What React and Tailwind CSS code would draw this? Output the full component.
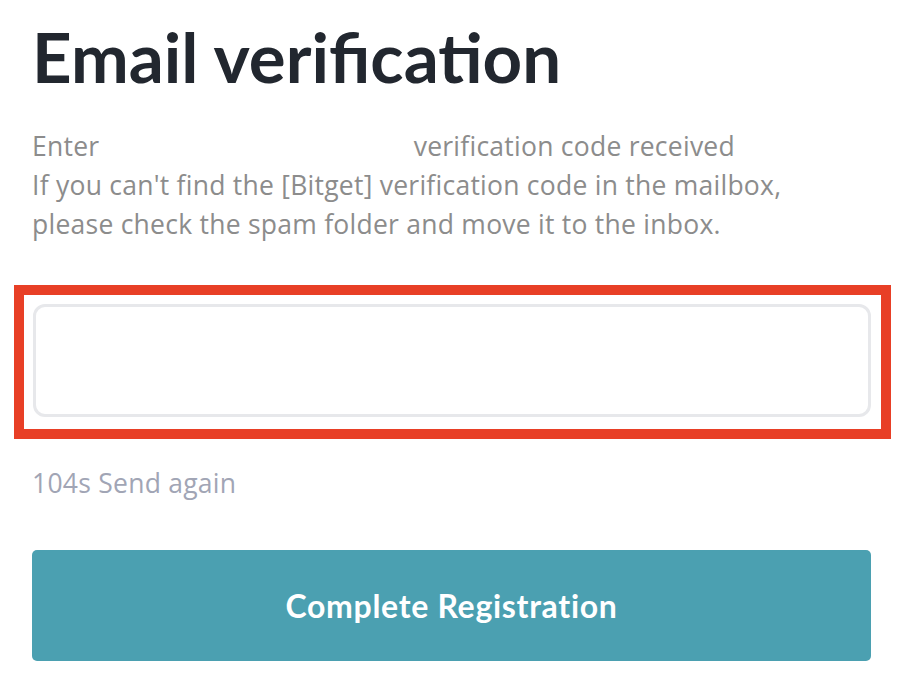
import React from "react";

const App = () => {
  return (
    <div className="w-[898px] h-[692px] bg-white overflow-hidden pl-8 pr-[27px] font-['Open_Sans',sans-serif]">
      {/* Title */}
      <h1 className="pt-[17px] text-[69px] leading-[80px] font-bold text-[#22272f] font-['Lato',sans-serif]">
        Email verification
      </h1>

      {/* Description */}
      <div className="mt-[30px] text-[26.5px] leading-[39px] tracking-[0.25px] text-[#8c8c8c]">
        <p>
          Enter <span className="inline-block w-[300px]"></span> verification code received
        </p>
        <p>If you can't find the [Bitget] verification code in the mailbox,</p>
        <p>please check the spam folder and move it to the inbox.</p>
      </div>

      {/* Code input (highlighted) */}
      <div className="mt-[41px] ml-[-18px] mr-[-20px] border-[10px] border-[#e83f26] pl-[9px] pr-[10px] pt-[9px] pb-[12px]">
        <div className="h-[113px] rounded-[12px] border-[3px] border-[#e7e8eb] bg-white"></div>
      </div>

      {/* Resend */}
      <p className="mt-[25px] text-[26.5px] leading-[39px] tracking-[0.25px] text-[#a1a5b5]">104s Send again</p>

      {/* Submit */}
      <button className="mt-[47px] w-full h-[111px] rounded-[5px] bg-[#4ba0b1] text-white text-[32px] font-bold tracking-[0.7px] font-['Lato',sans-serif]">
        Complete Registration
      </button>
    </div>
  );
};

export default App;
